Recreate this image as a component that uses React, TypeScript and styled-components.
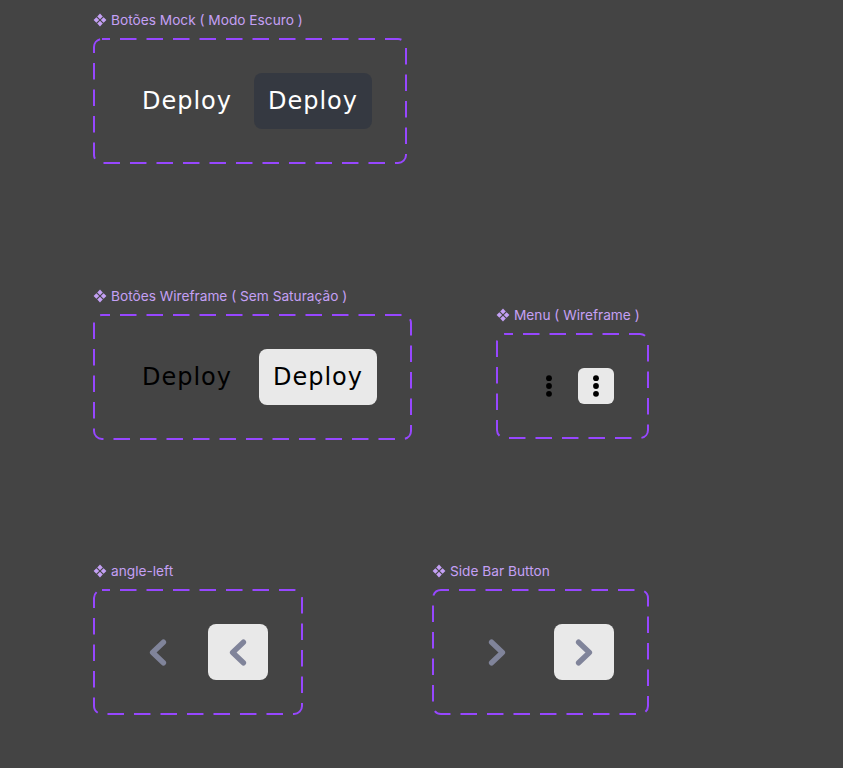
import React from "react";
import styled, { createGlobalStyle } from "styled-components";

const GlobalStyle = createGlobalStyle`
  html, body {
    margin: 0;
    padding: 0;
    background: #444444;
  }
  body {
    font-family: "Inter", "Noto Sans", sans-serif;
  }
`;

const Canvas = styled.div`
  position: relative;
  width: 843px;
  height: 768px;
  overflow: hidden;
  background: #444444;
`;

const SetWrap = styled.section<{ $x: number; $y: number }>`
  position: absolute;
  left: ${(p) => p.$x}px;
  top: ${(p) => p.$y}px;
  display: flex;
  flex-direction: column;
  gap: 10px;
`;

const SetLabel = styled.div`
  display: flex;
  align-items: center;
  gap: 4px;
  height: 16px;
  padding-left: 0px;
  font-family: "Inter", sans-serif;
  font-size: 13.7px;
  color: #c4a0f5;
  white-space: nowrap;
`;

const dashedBg = (w: number, h: number) => {
  const svg = `<svg xmlns='http://www.w3.org/2000/svg' width='${w}' height='${h}'><rect x='1' y='1' width='${w - 2}' height='${h - 2}' rx='8' ry='8' fill='none' stroke='#9747FF' stroke-width='2' stroke-dasharray='16.5 10' stroke-dashoffset='8.5'/></svg>`;
  return `url("data:image/svg+xml,${encodeURIComponent(svg)}")`;
};

const Frame = styled.div<{ $w: number; $h: number; $gap: number }>`
  box-sizing: border-box;
  width: ${(p) => p.$w}px;
  height: ${(p) => p.$h}px;
  padding: 0 35px;
  display: flex;
  align-items: center;
  gap: ${(p) => p.$gap}px;
  background-image: ${(p) => dashedBg(p.$w, p.$h)};
  background-repeat: no-repeat;
`;

type Tone = "plainDark" | "dark" | "plainLight" | "light";

const DeployButton = styled.div<{ $tone: Tone }>`
  box-sizing: border-box;
  width: 118px;
  height: 56px;
  border-radius: 8px;
  display: flex;
  align-items: center;
  justify-content: center;
  font-family: "DejaVu Sans", sans-serif;
  font-size: 24px;
  letter-spacing: 1px;
  line-height: 1;
  padding-bottom: 0;
  color: ${(p) => (p.$tone === "plainDark" || p.$tone === "dark" ? "#ffffff" : "#000000")};
  background: ${(p) =>
    p.$tone === "dark" ? "#353941" : p.$tone === "light" ? "#e9e9e9" : "transparent"};
`;

const IconButton = styled.div<{ $filled: boolean; $w: number; $h: number; $r: number }>`
  width: ${(p) => p.$w}px;
  height: ${(p) => p.$h}px;
  border-radius: ${(p) => p.$r}px;
  display: flex;
  align-items: center;
  justify-content: center;
  background: ${(p) => (p.$filled ? "#e9e9e9" : "transparent")};
`;

const ComponentIcon = () => (
  <svg width="14" height="14" viewBox="0 0 14 14">
    <g fill="#c4a0f5">
      <path d="M7 0.6 L9.8 3.4 L7 6.2 L4.2 3.4 Z" />
      <path d="M3.4 4.2 L6.2 7 L3.4 9.8 L0.6 7 Z" />
      <path d="M10.6 4.2 L13.4 7 L10.6 9.8 L7.8 7 Z" />
      <path d="M7 7.8 L9.8 10.6 L7 13.4 L4.2 10.6 Z" />
    </g>
  </svg>
);

const Kebab = () => (
  <svg width="36" height="36" viewBox="0 0 36 36">
    <g fill="#000">
      <circle cx="18" cy="10.2" r="2.9" />
      <circle cx="18" cy="18" r="2.9" />
      <circle cx="18" cy="25.8" r="2.9" />
    </g>
  </svg>
);

const Chevron = ({ dir }: { dir: "left" | "right" }) => (
  <svg width="18" height="27" viewBox="0 0 18 27">
    <path
      d={dir === "left" ? "M14.4 3.2 L3.6 13.5 L14.4 23.8" : "M3.6 3.2 L14.4 13.5 L3.6 23.8"}
      fill="none"
      stroke="#80849a"
      strokeWidth="5.4"
      strokeLinecap="round"
      strokeLinejoin="round"
    />
  </svg>
);

const ComponentSet = ({
  x,
  y,
  label,
  w,
  h,
  gap,
  children,
}: {
  x: number;
  y: number;
  label: string;
  w: number;
  h: number;
  gap: number;
  children: React.ReactNode;
}) => (
  <SetWrap $x={x} $y={y - 26}>
    <SetLabel>
      <ComponentIcon />
      <span>{label}</span>
    </SetLabel>
    <Frame $w={w} $h={h} $gap={gap}>
      {children}
    </Frame>
  </SetWrap>
);

export default function App() {
  return (
    <>
      <GlobalStyle />
      <Canvas>
        <ComponentSet x={93} y={38} label="Botões Mock ( Modo Escuro )" w={314} h={126} gap={8}>
          <DeployButton $tone="plainDark">Deploy</DeployButton>
          <DeployButton $tone="dark">Deploy</DeployButton>
        </ComponentSet>

        <ComponentSet x={93} y={314} label="Botões Wireframe ( Sem Saturação )" w={319} h={126} gap={13}>
          <DeployButton $tone="plainLight">Deploy</DeployButton>
          <DeployButton $tone="light">Deploy</DeployButton>
        </ComponentSet>

        <ComponentSet x={496} y={333} label="Menu ( Wireframe )" w={153} h={106} gap={11}>
          <IconButton $filled={false} $w={36} $h={36} $r={6}>
            <Kebab />
          </IconButton>
          <IconButton $filled $w={36} $h={36} $r={6}>
            <Kebab />
          </IconButton>
        </ComponentSet>

        <ComponentSet x={93} y={589} label="angle-left" w={210} h={126} gap={20}>
          <IconButton $filled={false} $w={60} $h={56} $r={8}>
            <Chevron dir="left" />
          </IconButton>
          <IconButton $filled $w={60} $h={56} $r={8}>
            <Chevron dir="left" />
          </IconButton>
        </ComponentSet>

        <ComponentSet x={432} y={589} label="Side Bar Button" w={217} h={126} gap={27}>
          <IconButton $filled={false} $w={60} $h={56} $r={8}>
            <Chevron dir="right" />
          </IconButton>
          <IconButton $filled $w={60} $h={56} $r={8}>
            <Chevron dir="right" />
          </IconButton>
        </ComponentSet>
      </Canvas>
    </>
  );
}
